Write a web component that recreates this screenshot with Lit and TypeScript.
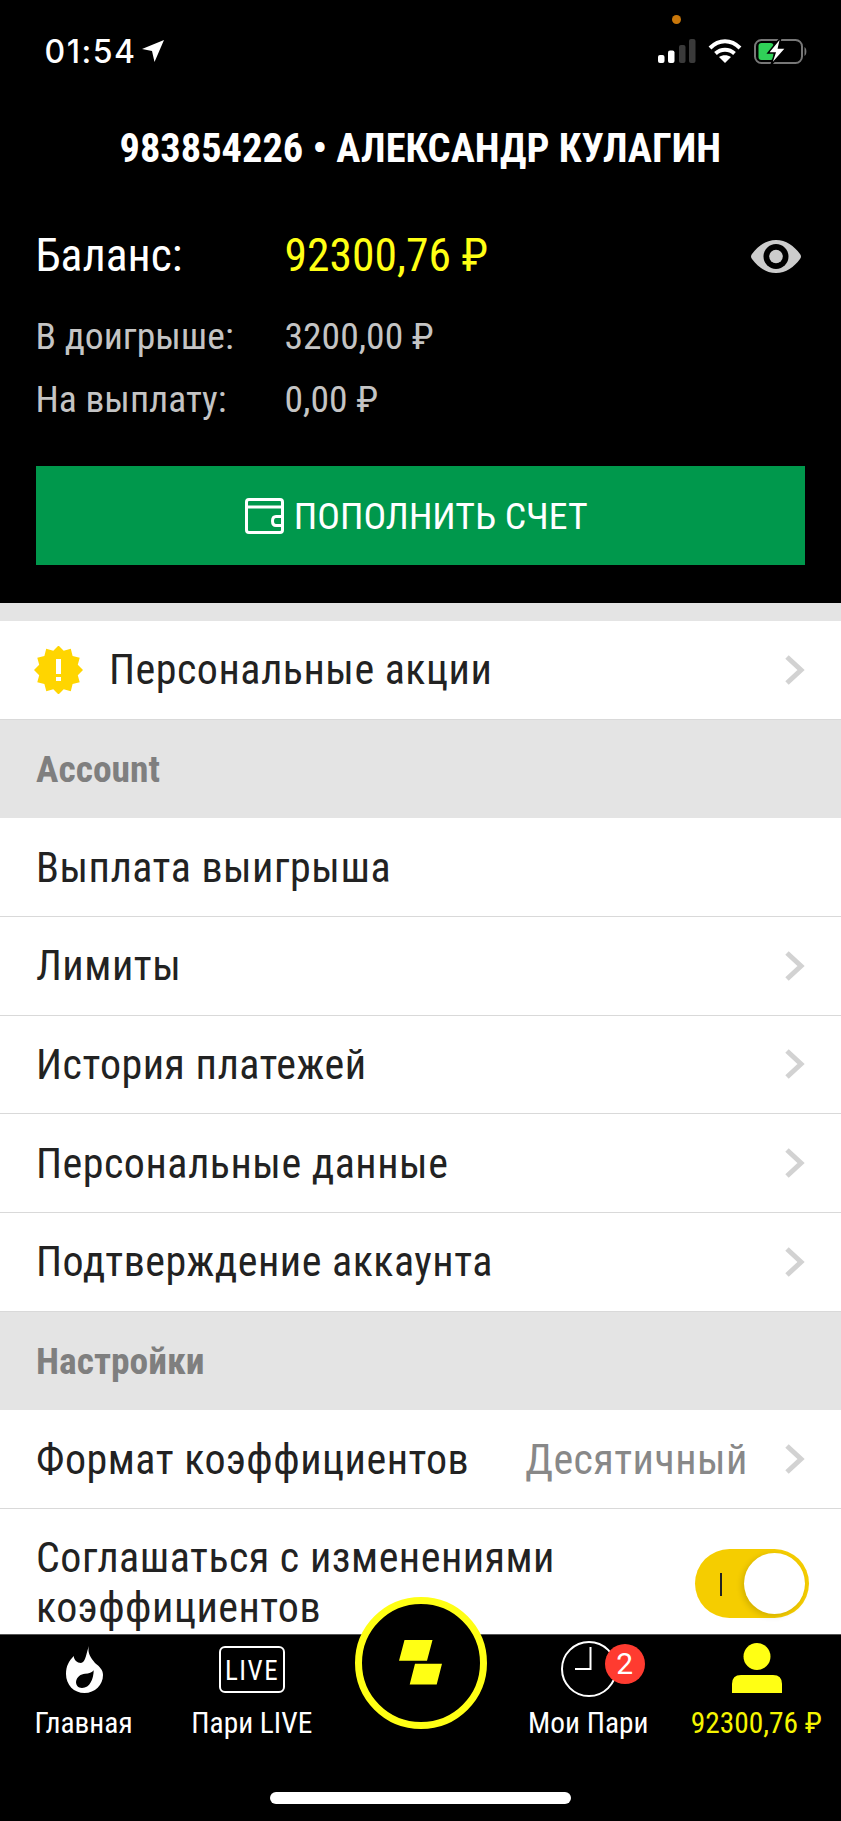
import { LitElement, css, html, svg } from 'lit';
import { customElement } from 'lit/decorators.js';

const chevron = html`<svg class="chev" width="22" height="32" viewBox="0 0 22 32">
  <path d="M3 3 L17 16 L3 29" fill="none" stroke="#d2d2d2" stroke-width="5" />
</svg>`;

const starPoints = () => {
  const pts: string[] = [];
  for (let i = 0; i < 24; i++) {
    const r = i % 2 ? 20 : 24.5;
    const a = (i / 24) * Math.PI * 2;
    pts.push(`${(24.5 + r * Math.cos(a)).toFixed(1)},${(24 + r * Math.sin(a)).toFixed(1)}`);
  }
  return pts.join(' ');
};

@customElement('app-root')
export class AppRoot extends LitElement {
  static styles = css`
    :host {
      display: block;
      font-family: Roboto, 'Noto Sans', sans-serif;
      font-stretch: 75%;
      color: #222;
    }
    .page {
      height: 1821px;
      overflow: hidden;
      display: flex;
      flex-direction: column;
      background: #fff;
    }
    .top {
      position: relative;
      background: #000;
      color: #fff;
      height: 603px;
      padding: 0 36px 0 35.5px;
      box-sizing: border-box;
      flex: none;
    }
    .dot {
      position: absolute;
      left: 672px;
      top: 15px;
      width: 9px;
      height: 9px;
      border-radius: 50%;
      background: #c9770a;
    }
    .status {
      display: flex;
      align-items: center;
      height: 26px;
      padding-top: 38px;
      margin: 0 -4px 0 9px;
    }
    .time {
      font-family: Inter, sans-serif;
      font-stretch: normal;
      font-size: 32px;
      font-weight: 500;
      letter-spacing: 1.5px;
      line-height: 26px;
      margin-top: 2px;
    }
    .arrow { margin-left: 5px; }
    .spacer { flex: 1; }
    .wifi { margin: 0 12px; }
    .title {
      margin-top: 65px;
      text-align: center;
      font-size: 40.4px;
      font-weight: 700;
      line-height: 40px;
      white-space: nowrap;
    }
    .bal {
      display: grid;
      grid-template-columns: 249px 1fr auto;
      align-items: center;
      margin-top: 65px;
      font-size: 45.6px;
      font-weight: 370;
      height: 44px;
      line-height: 44px;
    }
    .bal b { font-weight: 370; color: #ffff14; }
    .bal svg { margin-right: 4px; }
    .sub {
      display: grid;
      grid-template-columns: 249px 1fr;
      font-size: 37.6px;
      font-weight: 370;
      color: #c4c4c4;
      height: 63px;
      line-height: 63px;
    }
    .sub.first { margin-top: 27px; }
    .btn {
      display: flex;
      align-items: center;
      justify-content: center;
      gap: 10px;
      height: 99px;
      margin-top: 35px;
      padding-right: 8px;
      box-sizing: border-box;
      width: 769.5px;
      background: #00984c;
      color: #fff;
      font-size: 37.8px;
      font-weight: 370;
    }
    .strip { height: 18px; background: #e4e4e4; flex: none; }
    .row {
      display: flex;
      align-items: center;
      height: 98.67px;
      box-sizing: border-box;
      padding: 0 36px;
      border-bottom: 1px solid #d9d9d9;
      font-size: 42px;
      letter-spacing: 0.5px;
      flex: none;
      white-space: nowrap;
    }
    .row .grow { flex: 1; }
    .star { margin: 0 26px 0 -2px; }
    .chev { margin-right: -1px; flex: none; }
    .section {
      display: flex;
      align-items: center;
      height: 98.67px;
      box-sizing: border-box;
      padding: 0 36px;
      background: #e4e4e4;
      color: #7f7f7f;
      font-size: 37.5px;
      font-weight: 700;
      flex: none;
    }
    .val { color: #888; font-weight: 400; margin-right: 36px; }
    .wrap {
      display: flex;
      align-items: flex-start;
      padding: 24px 32px 0 36px;
      font-size: 42px;
      letter-spacing: 0.5px;
      line-height: 50px;
      flex: none;
    }
    .wrap .grow { flex: 1; }
    .toggle {
      position: relative;
      width: 114px;
      height: 69px;
      margin-top: 16px;
      border-radius: 35px;
      background: #f5cd00;
      flex: none;
    }
    .toggle i {
      position: absolute;
      left: 25px;
      top: 24px;
      width: 2px;
      height: 23px;
      background: #222;
    }
    .toggle u {
      position: absolute;
      right: 4px;
      top: 4px;
      width: 61px;
      height: 61px;
      border-radius: 50%;
      background: #fff;
      box-shadow: -2px 2px 6px rgba(0, 0, 0, 0.15);
    }
    .tabs {
      position: absolute;
      left: 0;
      right: 0;
      top: 1634px;
      height: 187px;
      background: #000;
      border-top: 1px solid #555;
      box-sizing: border-box;
      display: grid;
      grid-template-columns: repeat(5, 1fr);
      color: #fff;
      font-size: 29.4px;
      text-align: center;
    }
    .tab {
      position: relative;
      display: flex;
      flex-direction: column;
      align-items: center;
      padding-top: 7px;
    }
    .tab .ico {
      height: 58px;
      display: flex;
      align-items: flex-end;
      justify-content: center;
      padding-bottom: 7px;
      box-sizing: border-box;
    }
    .tab .clock { margin-bottom: -4px; }
    .tab span { line-height: 36px; margin: 5px 1px 0 0; white-space: nowrap; }
    .tab.me { color: #f5f500; }
    .badge {
      position: absolute;
      left: 100px;
      top: 9px;
      width: 40px;
      height: 40px;
      border-radius: 50%;
      background: #ff3b30;
      color: #fff;
      font-size: 30px;
      line-height: 40px;
      font-stretch: normal;
    }
    .circle {
      position: absolute;
      left: 355px;
      top: -38px;
      width: 132px;
      height: 132px;
      box-sizing: border-box;
      border: 7px solid #ffff14;
      border-radius: 50%;
      background: #000;
      display: flex;
      align-items: center;
      justify-content: center;
    }
    .home {
      position: absolute;
      left: 270px;
      top: 157px;
      width: 301px;
      height: 12px;
      border-radius: 6px;
      background: #fff;
    }
  `;

  render() {
    const signal = svg`
      <rect x="0" y="16" width="6.5" height="8" rx="2" fill="#fff" />
      <rect x="10" y="11.5" width="6.5" height="12.5" rx="2" fill="#fff" />
      <rect x="21" y="6" width="6.5" height="18" rx="2" fill="#3a3a3a" />
      <rect x="31" y="0" width="6.5" height="24" rx="2" fill="#3a3a3a" />`;
    return html`
      <div class="page">
        <div class="top">
          <div class="dot"></div>
          <div class="status">
            <span class="time">01:54</span>
            <svg class="arrow" width="24" height="24" viewBox="0 0 22 24">
              <path d="M22 1 L12.5 23 L10 12 L0 10 Z" fill="#fff" />
            </svg>
            <div class="spacer"></div>
            <svg width="38" height="24" viewBox="0 0 38 24">${signal}</svg>
            <svg class="wifi" width="34" height="24" viewBox="0 0 34 24">
              <path d="M2 9 C11 0 23 0 32 9" fill="none" stroke="#fff" stroke-width="4" />
              <path d="M7.5 14.5 C13 9.5 21 9.5 26.5 14.5" fill="none" stroke="#fff" stroke-width="4" />
              <path d="M17 24 L11 18 C14.5 15.5 19.5 15.5 23 18 Z" fill="#fff" />
            </svg>
            <svg width="55" height="28" viewBox="0 0 55 28">
              <rect x="1" y="3" width="47" height="23" rx="6.5" fill="none" stroke="#777" stroke-width="2" />
              <path d="M50.5 10 C53 11 53 18 50.5 19 Z" fill="#777" />
              <rect x="4.5" y="6" width="15" height="17" rx="3" fill="#30d158" />
              <path d="M27 0 L14 16 L21 16 L17 28 L32 11 L24.5 11 Z" fill="#fff" stroke="#000" stroke-width="1.5" />
            </svg>
          </div>
          <div class="title">983854226 • АЛЕКСАНДР КУЛАГИН</div>
          <div class="bal">
            <span>Баланс:</span><b>92300,76 ₽</b>
            <svg width="50" height="33" viewBox="0 0 50 33">
              <path d="M25 0 C35 0 43 6 49 14 Q51 16.5 49 19 C43 27 35 33 25 33 C15 33 7 27 1 19 Q-1 16.5 1 14 C7 6 15 0 25 0 Z" fill="#ccc" />
              <circle cx="25" cy="16.5" r="12.5" fill="#000" />
              <circle cx="25" cy="16.5" r="6.8" fill="#ccc" />
            </svg>
          </div>
          <div class="sub first"><span>В доигрыше:</span><span>3200,00 ₽</span></div>
          <div class="sub"><span>На выплату:</span><span>0,00 ₽</span></div>
          <div class="btn">
            <svg width="39" height="36" viewBox="0 0 39 36">
              <path d="M4 1.5 H35 Q37.5 1.5 37.5 4 V32 Q37.5 34.5 35 34.5 H4 Q1.5 34.5 1.5 32 V4 Q1.5 1.5 4 1.5 Z M1.5 9 H37.5" fill="none" stroke="#fff" stroke-width="3" />
              <path d="M37.5 18.5 H31 Q27.5 18.5 27.5 23 Q27.5 27.5 31 27.5 H37.5" fill="none" stroke="#fff" stroke-width="3" />
            </svg>
            <span>ПОПОЛНИТЬ СЧЕТ</span>
          </div>
        </div>
        <div class="strip"></div>
        <div class="row">
          <svg class="star" width="49" height="48" viewBox="0 0 49 48">
            <polygon points=${starPoints()} fill="#ffd500" />
            <rect x="22" y="13" width="5" height="15" fill="#fff" />
            <rect x="22" y="31" width="5" height="4" fill="#fff" />
          </svg>
          <span class="grow">Персональные акции</span>${chevron}
        </div>
        <div class="section">Account</div>
        <div class="row"><span class="grow">Выплата выигрыша</span></div>
        <div class="row"><span class="grow">Лимиты</span>${chevron}</div>
        <div class="row"><span class="grow">История платежей</span>${chevron}</div>
        <div class="row"><span class="grow">Персональные данные</span>${chevron}</div>
        <div class="row"><span class="grow">Подтверждение аккаунта</span>${chevron}</div>
        <div class="section">Настройки</div>
        <div class="row"><span class="grow">Формат коэффициентов</span><span class="val">Десятичный</span>${chevron}</div>
        <div class="wrap">
          <span class="grow">Соглашаться с изменениями<br />коэффициентов</span>
          <div class="toggle"><i></i><u></u></div>
        </div>
        <div class="tabs">
          <div class="tab">
            <div class="ico">
              <svg width="37" height="47" viewBox="0 0 37 47">
                <path d="M23 0 C21 7 25 12 29 17 C34 21 37 24 37 29 C37 39 29 47 18.5 47 C8 47 0 39 0 28 C0 20 3 15 7.7 10 C8 14 11 17 15 17 C20 16 20 7 23 0 Z" fill="#fff" />
                <path d="M27.7 24.3 C27.5 33 24 42 16 42 C12 42 10 39 10 36 C10.5 31 15 28 19 27.8 C23 27.6 26 26.5 27.7 24.3 Z" fill="#000" />
              </svg>
            </div>
            <span>Главная</span>
          </div>
          <div class="tab">
            <div class="ico">
              <svg width="66" height="47" viewBox="0 0 66 47">
                <rect x="1" y="1" width="64" height="45" rx="5" fill="none" stroke="#fff" stroke-width="2" />
                <text x="33" y="34" text-anchor="middle" font-size="27" fill="#fff" font-family="Roboto" letter-spacing="1.5" style="font-stretch:75%">LIVE</text>
              </svg>
            </div>
            <span>Пари LIVE</span>
          </div>
          <div class="tab"></div>
          <div class="tab">
            <div class="ico">
              <svg class="clock" width="56" height="56" viewBox="0 0 56 56">
                <circle cx="28" cy="28" r="27" fill="none" stroke="#fff" stroke-width="2" />
                <path d="M29.5 6 V28 H14" fill="none" stroke="#fff" stroke-width="2" />
              </svg>
            </div>
            <span>Мои Пари</span>
            <div class="badge">2</div>
          </div>
          <div class="tab me">
            <div class="ico">
              <svg width="50" height="50" viewBox="0 0 50 50">
                <circle cx="25" cy="13.5" r="13.5" fill="#ffff14" />
                <path d="M0 50 V41 Q0 32 9 32 H41 Q50 32 50 41 V50 Z" fill="#ffff14" />
              </svg>
            </div>
            <span>92300,76 ₽</span>
          </div>
          <div class="circle">
            <svg width="44" height="46" viewBox="0 0 44 46">
              <path d="M5.5 0 H33.5 L28 20.7 H0 Z M16 23.7 H43 L37.7 44.4 H10.7 Z" fill="#ffff14" />
            </svg>
          </div>
          <div class="home"></div>
        </div>
      </div>
    `;
  }
}

declare global {
  interface HTMLElementTagNameMap {
    'app-root': AppRoot;
  }
}
